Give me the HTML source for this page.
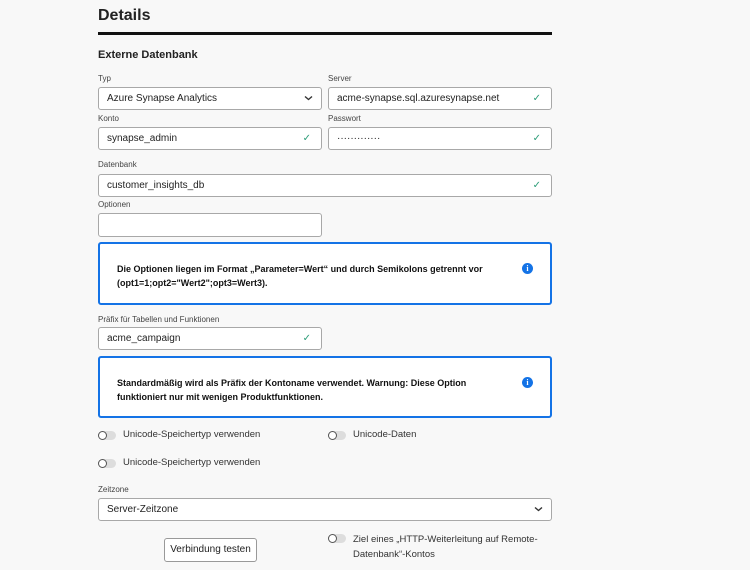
<!DOCTYPE html><html><head><style>
body{margin:0;width:750px;height:570px;background:#f8f8f8;font-family:"Liberation Sans",sans-serif;color:#222;position:relative;overflow:hidden}
.a{position:absolute}
.lbl{position:absolute;font-size:8px;color:#444}
.in{position:absolute;height:23px;background:#fff;border:1px solid #a8a8a8;border-radius:3px;box-sizing:border-box;font-size:10px;padding-left:8px;color:#222;display:flex;align-items:center}
.ck{position:absolute;right:10px;top:5px;color:#2d9d78;font-size:10px;line-height:12px}
.chev{position:absolute;right:8px;top:7px}
.info{position:absolute;left:98px;width:454px;border:2px solid #1473e6;border-radius:3px;box-sizing:border-box;background:#fff;font-size:9px;font-weight:bold;line-height:14px;color:#111}
.ic{position:absolute;right:17px;width:11px;height:11px;border-radius:50%;background:#1473e6;color:#fff;font-size:8px;line-height:11px;text-align:center;font-family:"Liberation Serif",serif;font-weight:bold}
.tg{position:absolute;width:18px;height:9px;border-radius:5px;background:#ddd}
.tg:before{content:"";position:absolute;left:0;top:0;width:7px;height:7px;border:1px solid #555;border-radius:50%;background:#fff}
.tl{position:absolute;font-size:9.5px;color:#333}
</style></head><body>
<div class="a" style="left:98px;top:7px;font-size:16px;font-weight:bold">Details</div>
<div class="a" style="left:98px;top:32px;width:454px;height:3px;background:#111"></div>
<div class="a" style="left:98px;top:49px;font-size:11px;font-weight:bold">Externe Datenbank</div>
<div class="lbl" style="left:98px;top:74px">Typ</div>
<div class="lbl" style="left:328px;top:74px">Server</div>
<div class="in" style="left:98px;top:87px;width:224px">Azure Synapse Analytics<svg class="chev" width="9" height="6" viewBox="0 0 9 6"><path d="M1 1.5L4.5 4.5L8 1.5" fill="none" stroke="#333" stroke-width="1.4"/></svg></div>
<div class="in" style="left:328px;top:87px;width:224px">acme-synapse.sql.azuresynapse.net<span class="ck">✓</span></div>
<div class="lbl" style="left:98px;top:114px">Konto</div>
<div class="lbl" style="left:328px;top:114px">Passwort</div>
<div class="in" style="left:98px;top:127px;width:224px">synapse_admin<span class="ck">✓</span></div>
<div class="in" style="left:328px;top:127px;width:224px">·············<span class="ck">✓</span></div>
<div class="lbl" style="left:98px;top:160px">Datenbank</div>
<div class="in" style="left:98px;top:174px;width:454px">customer_insights_db<span class="ck">✓</span></div>
<div class="lbl" style="left:98px;top:200px">Optionen</div>
<div class="in" style="left:98px;top:213px;width:224px;height:24px"></div>
<div class="info" style="top:242px;height:63px;padding:18px 0 0 17px">Die Optionen liegen im Format „Parameter=Wert“ und durch Semikolons getrennt vor<br>(opt1=1;opt2="Wert2";opt3=Wert3).<div class="ic" style="top:19px">i</div></div>
<div class="lbl" style="left:98px;top:315px">Präfix für Tabellen und Funktionen</div>
<div class="in" style="left:98px;top:327px;width:224px">acme_campaign<span class="ck">✓</span></div>
<div class="info" style="top:356px;height:62px;padding:18px 0 0 17px">Standardmäßig wird als Präfix der Kontoname verwendet. Warnung: Diese Option<br>funktioniert nur mit wenigen Produktfunktionen.<div class="ic" style="top:19px">i</div></div>
<div class="tg" style="left:98px;top:431px"></div><div class="tl" style="left:123px;top:429px">Unicode-Speichertyp verwenden</div>
<div class="tg" style="left:328px;top:431px"></div><div class="tl" style="left:353px;top:429px">Unicode-Daten</div>
<div class="tg" style="left:98px;top:459px"></div><div class="tl" style="left:123px;top:457px">Unicode-Speichertyp verwenden</div>
<div class="lbl" style="left:98px;top:485px">Zeitzone</div>
<div class="in" style="left:98px;top:498px;width:454px">Server-Zeitzone<svg class="chev" width="9" height="6" viewBox="0 0 9 6"><path d="M1 1.5L4.5 4.5L8 1.5" fill="none" stroke="#333" stroke-width="1.4"/></svg></div>
<div class="a" style="left:164px;top:538px;width:93px;height:24px;border:1px solid #999;border-radius:3px;background:#fff;box-sizing:border-box;font-size:10px;text-align:center;line-height:22px">Verbindung testen</div>
<div class="tg" style="left:328px;top:534px"></div><div class="tl" style="left:353px;top:532px;line-height:15px">Ziel eines „HTTP-Weiterleitung auf Remote-<br>Datenbank“-Kontos</div>
</body></html>
